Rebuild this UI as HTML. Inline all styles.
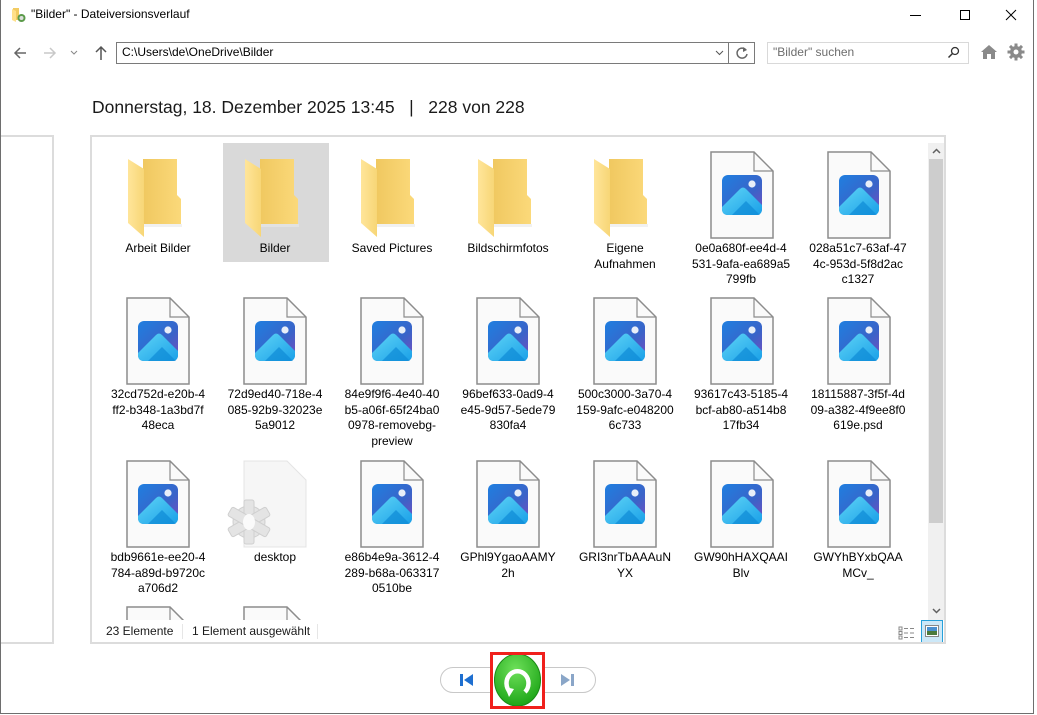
<!DOCTYPE html>
<html><head><meta charset="utf-8">
<style>
*{margin:0;padding:0;box-sizing:border-box}
body{width:1037px;height:715px;overflow:hidden;background:#fff;font-family:"Segoe UI","Liberation Sans",sans-serif;position:relative;color:#000}
.abs{position:absolute}
.win{position:absolute;left:0;top:0;width:1034px;height:714px;border:1px solid #6e6e6e;border-top:none;background:#fff}
.lbl{position:absolute;width:110px;text-align:center;font-size:12px;line-height:15.5px;color:#000;word-wrap:break-word}
.ic{position:absolute}
</style></head><body>
<svg width="0" height="0" style="position:absolute">
<defs>
<linearGradient id="fg" x1="0" x2="1"><stop offset="0" stop-color="#f0c860"/><stop offset="1" stop-color="#fbd97a"/></linearGradient>
<linearGradient id="ff" x1="0" x2="1"><stop offset="0" stop-color="#ffe59a"/><stop offset="1" stop-color="#f7d676"/></linearGradient>
<linearGradient id="tile" x1="0" y1="0" x2="1" y2="1"><stop offset="0" stop-color="#1f7fe0"/><stop offset="0.6" stop-color="#3a63c8"/><stop offset="1" stop-color="#7a4cc0"/></linearGradient>
<linearGradient id="mt" x1="0" y1="0" x2="1" y2="1"><stop offset="0" stop-color="#5fd4f6"/><stop offset="1" stop-color="#1aa0e8"/></linearGradient>
<symbol id="folder" viewBox="0 0 56 82">
<path d="M17 4 H51 V40 L55 44 V69 H17 Z" fill="url(#fg)"/>
<path d="M2 4 L18 14 V82 L2 68 Z" fill="url(#ff)"/>
<path d="M18 69 H60 L56 72 H18Z" fill="#e8e8e8" opacity=".6"/>
</symbol>
<symbol id="file" viewBox="0 0 64 88">
<path d="M1 1 H44 L63 20 V87 H1 Z" fill="#fafafa" stroke="#8c8c8c" stroke-width="1.5"/>
<path d="M44 1 V20 H63" fill="none" stroke="#8c8c8c" stroke-width="1.2"/>
<rect x="12" y="24" width="40" height="40" rx="6" fill="url(#tile)"/>
<circle cx="42" cy="33" r="3.6" fill="#e8eef8"/>
<path d="M12 56 L30 38 Q33 35 36 38 L52 54 V58 Q52 64 46 64 H18 Q12 64 12 58Z" fill="url(#mt)"/>
<path d="M22 64 L36 50 L50 64Z" fill="#0e8ad6" opacity=".7"/>
</symbol>
</defs>
</svg>
<div class="win">
<svg class="abs" style="left:10px;top:7px" width="16" height="16" viewBox="0 0 16 16"><path d="M2 1 H8 V13 H2Z" fill="#f2cb62"/><path d="M1 2 L5 4 V15 L1 13Z" fill="#ffe08a"/><circle cx="10.5" cy="11" r="4" fill="#5b9a4a"/><circle cx="10.5" cy="11" r="2" fill="#ddd"/></svg>
<div class="abs" style="left:30px;top:7px;font-size:12px">"Bilder" - Dateiversionsverlauf</div>
<div class="abs" style="left:909px;top:15px;width:11px;height:1px;background:#000"></div>
<div class="abs" style="left:959px;top:10px;width:10px;height:10px;border:1px solid #000"></div>
<svg class="abs" style="left:1004px;top:9px" width="12" height="12"><path d="M1 1 L11 11 M11 1 L1 11" stroke="#000" stroke-width="1"/></svg>
<svg class="abs" style="left:12px;top:46px" width="14" height="14"><path d="M13 7 H2 M7 2 L2 7 L7 12" stroke="#666" stroke-width="1.5" fill="none"/></svg>
<svg class="abs" style="left:42px;top:46px" width="14" height="14"><path d="M1 7 H12 M7 2 L12 7 L7 12" stroke="#c8c8c8" stroke-width="1.5" fill="none"/></svg>
<svg class="abs" style="left:69px;top:50px" width="8" height="6"><path d="M1 1 L4 4 L7 1" stroke="#888" fill="none"/></svg>
<svg class="abs" style="left:94px;top:45px" width="12" height="15"><path d="M6 15 V2 M1 7 L6 2 L11 7" stroke="#555" stroke-width="1.5" fill="none"/></svg>
<div class="abs" style="left:115px;top:42px;width:639px;height:22px;border:1px solid #7a7a7a"></div>
<div class="abs" style="left:121px;top:45px;font-size:12px">C:\Users\de\OneDrive\Bilder</div>
<div class="abs" style="left:727px;top:42px;width:1px;height:22px;background:#7a7a7a"></div>
<svg class="abs" style="left:714px;top:50px" width="9" height="6"><path d="M1 1 L4.5 4.5 L8 1" stroke="#555" fill="none"/></svg>
<svg class="abs" style="left:734px;top:46px" width="14" height="14"><path d="M11 4 A5 5 0 1 0 12 8" stroke="#666" stroke-width="1.5" fill="none"/><path d="M8 1 L12 4 L8 6Z" fill="#666"/></svg>
<div class="abs" style="left:766px;top:42px;width:202px;height:22px;border:1px solid #d9d9d9"></div>
<div class="abs" style="left:772px;top:45px;font-size:12px;color:#6d6d6d">"Bilder" suchen</div>
<svg class="abs" style="left:946px;top:46px" width="13" height="13"><circle cx="8" cy="5" r="3.5" stroke="#333" stroke-width="1.3" fill="none"/><path d="M5.5 7.5 L1.5 11.5" stroke="#333" stroke-width="1.5"/></svg>
<svg class="abs" style="left:979px;top:44px" width="18" height="16"><path d="M9 1 L17 8 H15 V15 H11 V10 H7 V15 H3 V8 H1Z" fill="#8a8a8a"/></svg>
<svg class="abs" style="left:1006px;top:43px" width="18" height="18" viewBox="0 0 18 18"><g fill="#8a8a8a"><circle cx="9" cy="9" r="6"/><rect x="7.5" y="0.5" width="3" height="17"/><rect x="0.5" y="7.5" width="17" height="3"/><rect x="7.5" y="0.5" width="3" height="17" transform="rotate(45 9 9)"/><rect x="7.5" y="0.5" width="3" height="17" transform="rotate(-45 9 9)"/></g><circle cx="9" cy="9" r="2.5" fill="#fff"/></svg>
<div class="abs" style="left:91px;top:97px;font-size:17.5px;color:#1a1a1a;white-space:pre">Donnerstag, 18. Dezember 2025 13:45   |   228 von 228</div>
<div class="abs" style="left:0;top:135px;width:53px;height:509px;border:2px solid #dcdcdc;border-left:none"></div>
<div class="abs" style="left:89px;top:135px;width:856px;height:509px;border:2px solid #dcdcdc;overflow:hidden">
 <div class="abs" style="left:836px;top:6px;width:16px;height:477px;background:#f0f0f0"></div>
 <div class="abs" style="left:837px;top:22px;width:14px;height:364px;background:#cdcdcd"></div>
 <svg class="abs" style="left:840px;top:11px" width="9" height="6"><path d="M1 5 L4.5 1.5 L8 5" stroke="#606060" stroke-width="1.5" fill="none"/></svg>
 <svg class="abs" style="left:840px;top:471px" width="9" height="6"><path d="M1 1 L4.5 4.5 L8 1" stroke="#606060" stroke-width="1.5" fill="none"/></svg>
 <div class="abs" style="left:131px;top:6px;width:106px;height:119px;background:#d9d9d9"></div>
 <div class="abs" style="left:0;top:483px;width:836px;height:24px;background:#fff"></div>
 <div class="abs" style="left:14px;top:487px;font-size:12px;color:#1a1a1a">23 Elemente</div>
 <div class="abs" style="left:90px;top:487px;width:1px;height:15px;background:#e6e6e6"></div>
 <div class="abs" style="left:100px;top:487px;font-size:12px;color:#1a1a1a">1 Element ausgewählt</div>
 <div class="abs" style="left:225px;top:487px;width:1px;height:15px;background:#e6e6e6"></div>
 <svg class="abs" style="left:806px;top:489px" width="18" height="14"><g fill="none" stroke="#888"><rect x="1" y="1" width="3" height="3"/><rect x="1" y="5.5" width="3" height="3"/><rect x="1" y="10" width="3" height="3"/><path d="M6 2.5 H10 M12 2.5 H16 M6 7 H10 M12 7 H16 M6 11.5 H10 M12 11.5 H16"/></g></svg>
 <div class="abs" style="left:829px;top:483px;width:22px;height:23px;background:#cce8f8;border:1px solid #26a0da"></div>
 <svg class="abs" style="left:833px;top:488px" width="14" height="12"><rect x=".5" y=".5" width="13" height="11" fill="#fff" stroke="#888"/><rect x="2" y="2" width="10" height="8" fill="#4a90d0"/><rect x="2" y="6" width="10" height="4" fill="#4b7a3c"/></svg>
</div>
<div class="abs" style="left:439px;top:667px;width:156px;height:26px;border:1px solid #c8c8c8;border-radius:13px;background:#fff"></div>
<svg class="abs" style="left:458px;top:673px" width="16" height="14"><rect x="1" y="1" width="3" height="12" fill="#1e6fd0"/><path d="M14 1 V13 L5 7Z" fill="#1e6fd0"/></svg>
<svg class="abs" style="left:558px;top:673px" width="16" height="14"><path d="M2 1 V13 L11 7Z" fill="#8aa6c8"/><rect x="12" y="1" width="3" height="12" fill="#8aa6c8"/></svg>
<div class="abs" style="left:490px;top:652px;width:53px;height:56px;background:#fff"></div>
<svg class="abs" style="left:489px;top:652px" width="55" height="57" viewBox="0 0 55 57">
<defs><radialGradient id="gb" cx=".45" cy=".3" r=".7"><stop offset="0" stop-color="#6ee05a"/><stop offset="1" stop-color="#1ea618"/></radialGradient></defs>
<ellipse cx="27.5" cy="28" rx="23" ry="26" fill="url(#gb)" stroke="#1a8a16"/>
<path d="M20 40 A11 12 0 1 1 35 40" stroke="#fff" stroke-width="4.5" fill="none"/>
<path d="M15 35 L24 37 L19 45Z" fill="#fff"/>
<rect x="1.5" y="1.5" width="52" height="54" fill="none" stroke="#f0201c" stroke-width="3"/>
</svg>
</div>
<div class="abs" style="left:0;top:0">
<svg class="ic" style="left:126px;top:155px" width="56" height="82"><use href="#folder"/></svg>
<svg class="ic" style="left:243px;top:155px" width="56" height="82"><use href="#folder"/></svg>
<svg class="ic" style="left:359px;top:155px" width="56" height="82"><use href="#folder"/></svg>
<svg class="ic" style="left:476px;top:155px" width="56" height="82"><use href="#folder"/></svg>
<svg class="ic" style="left:592px;top:155px" width="56" height="82"><use href="#folder"/></svg>
<svg class="ic" style="left:710px;top:151px" width="64" height="88"><use href="#file"/></svg>
<svg class="ic" style="left:827px;top:151px" width="64" height="88"><use href="#file"/></svg>
<div class="lbl" style="left:103px;top:241px">Arbeit Bilder</div>
<div class="lbl" style="left:220px;top:241px">Bilder</div>
<div class="lbl" style="left:337px;top:241px">Saved Pictures</div>
<div class="lbl" style="left:453px;top:241px">Bildschirmfotos</div>
<div class="lbl" style="left:570px;top:241px">Eigene<br>Aufnahmen</div>
<div class="lbl" style="left:686px;top:241px">0e0a680f-ee4d-4 531-9afa-ea689a5 799fb</div>
<div class="lbl" style="left:803px;top:241px">028a51c7-63af-47 4c-953d-5f8d2ac c1327</div>
<svg class="ic" style="left:126px;top:297px" width="64" height="88"><use href="#file"/></svg>
<svg class="ic" style="left:243px;top:297px" width="64" height="88"><use href="#file"/></svg>
<svg class="ic" style="left:360px;top:297px" width="64" height="88"><use href="#file"/></svg>
<svg class="ic" style="left:476px;top:297px" width="64" height="88"><use href="#file"/></svg>
<svg class="ic" style="left:593px;top:297px" width="64" height="88"><use href="#file"/></svg>
<svg class="ic" style="left:710px;top:297px" width="64" height="88"><use href="#file"/></svg>
<svg class="ic" style="left:827px;top:297px" width="64" height="88"><use href="#file"/></svg>
<div class="lbl" style="left:103px;top:387px">32cd752d-e20b-4 ff2-b348-1a3bd7f 48eca</div>
<div class="lbl" style="left:220px;top:387px">72d9ed40-718e-4 085-92b9-32023e 5a9012</div>
<div class="lbl" style="left:337px;top:387px">84e9f9f6-4e40-40 b5-a06f-65f24ba0 0978-removebg-preview</div>
<div class="lbl" style="left:453px;top:387px">96bef633-0ad9-4 e45-9d57-5ede79 830fa4</div>
<div class="lbl" style="left:570px;top:387px">500c3000-3a70-4 159-9afc-e048200 6c733</div>
<div class="lbl" style="left:686px;top:387px">93617c43-5185-4 bcf-ab80-a514b8 17fb34</div>
<div class="lbl" style="left:803px;top:387px">18115887-3f5f-4d 09-a382-4f9ee8f0 619e.psd</div>
<svg class="ic" style="left:126px;top:460px" width="64" height="88"><use href="#file"/></svg>
<svg class="ic" style="left:243px;top:460px" width="64" height="88"><path d="M1 1 H44 L63 20 V87 H1 Z" fill="#f6f6f6" stroke="#e4e4e4"/></svg>
<svg class="ic" style="left:226px;top:496px" width="46" height="52" viewBox="0 0 46 52"><g fill="#e4e4e4" stroke="#cfcfcf"><circle cx="23" cy="26" r="16"/><rect x="18" y="4" width="10" height="44" rx="2"/><rect x="18" y="4" width="10" height="44" rx="2" transform="rotate(60 23 26)"/><rect x="18" y="4" width="10" height="44" rx="2" transform="rotate(-60 23 26)"/></g><ellipse cx="23" cy="26" rx="6" ry="8" fill="#fafafa"/></svg>
<svg class="ic" style="left:360px;top:460px" width="64" height="88"><use href="#file"/></svg>
<svg class="ic" style="left:476px;top:460px" width="64" height="88"><use href="#file"/></svg>
<svg class="ic" style="left:593px;top:460px" width="64" height="88"><use href="#file"/></svg>
<svg class="ic" style="left:710px;top:460px" width="64" height="88"><use href="#file"/></svg>
<svg class="ic" style="left:827px;top:460px" width="64" height="88"><use href="#file"/></svg>
<div class="lbl" style="left:103px;top:550px">bdb9661e-ee20-4 784-a89d-b9720c a706d2</div>
<div class="lbl" style="left:220px;top:550px">desktop</div>
<div class="lbl" style="left:337px;top:550px">e86b4e9a-3612-4 289-b68a-063317 0510be</div>
<div class="lbl" style="left:453px;top:550px">GPhl9YgaoAAMY 2h</div>
<div class="lbl" style="left:570px;top:550px">GRI3nrTbAAAuN YX</div>
<div class="lbl" style="left:686px;top:550px">GW90hHAXQAAI Blv</div>
<div class="lbl" style="left:803px;top:550px">GWYhBYxbQAA MCv_</div>
<div class="abs" style="left:126px;top:606px;width:64px;height:14px;overflow:hidden"><svg width="64" height="88"><use href="#file"/></svg></div>
<div class="abs" style="left:243px;top:606px;width:64px;height:14px;overflow:hidden"><svg width="64" height="88"><use href="#file"/></svg></div>
</div>
</body></html>
